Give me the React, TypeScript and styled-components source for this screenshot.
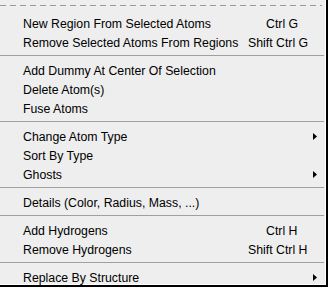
import React from 'react';
import styled, { createGlobalStyle } from 'styled-components';

const GlobalStyle = createGlobalStyle`
  html, body {
    margin: 0;
    padding: 0;
    background: #eeeeee;
  }
  body {
    font-family: 'Liberation Sans', Arial, sans-serif;
  }
`;

const Menu = styled.div`
  box-sizing: border-box;
  width: 328px;
  height: 287px;
  overflow: hidden;
  background-color: #eeeeee;
  border-right: 2px solid #000;
  border-bottom: 2px solid #000;
  box-shadow: inset -1px -1px 0 #ffffff;
  display: flex;
  flex-direction: column;
`;

const TearOff = styled.div`
  flex: none;
  height: 14px;
  padding-top: 5px;
  box-sizing: border-box;
  margin-right: 4px;

  &::before {
    content: '';
    display: block;
    height: 1px;
    background: repeating-linear-gradient(
      to right,
      #999999 0 6px,
      transparent 6px 10px
    );
  }
`;

const Item = styled.div`
  flex: none;
  display: grid;
  grid-template-columns: 248px 1fr 14px;
  align-items: center;
  box-sizing: border-box;
  height: 19px;
  padding-top: 1px;
  font-size: 12.3px;
  line-height: 18px;
  color: #000;
  white-space: nowrap;
  cursor: default;
`;

const Label = styled.span`
  padding-left: 23px;
`;

const Accel = styled.span<{ $shift?: number }>`
  padding-left: ${({ $shift }) => $shift ?? 0}px;
`;

const ArrowIcon = styled.svg`
  display: block;
  width: 4px;
  height: 7px;
  margin-left: 1px;
  margin-top: -1px;
`;

const Arrow = () => (
  <ArrowIcon viewBox="0 0 4 7">
    <polygon points="0,0 4,3.5 0,7" fill="#000" />
  </ArrowIcon>
);

const Separator = styled.div`
  flex: none;
  height: 9px;
  padding-top: 3px;
  box-sizing: border-box;
  margin-right: 2px;

  &::before {
    content: '';
    display: block;
    height: 1px;
    background-color: #a0a0a0;
  }
`;

type Entry =
  | { sep: true }
  | { label: string; accel?: string; shift?: number; sub?: boolean };

const entries: Entry[] = [
  { label: 'New Region From Selected Atoms', accel: 'Ctrl G', shift: 18 },
  { label: 'Remove Selected Atoms From Regions', accel: 'Shift Ctrl G' },
  { sep: true },
  { label: 'Add Dummy At Center Of Selection' },
  { label: 'Delete Atom(s)' },
  { label: 'Fuse Atoms' },
  { sep: true },
  { label: 'Change Atom Type', sub: true },
  { label: 'Sort By Type' },
  { label: 'Ghosts', sub: true },
  { sep: true },
  { label: 'Details (Color, Radius, Mass, ...)' },
  { sep: true },
  { label: 'Add Hydrogens', accel: 'Ctrl H', shift: 18 },
  { label: 'Remove Hydrogens', accel: 'Shift Ctrl H' },
  { sep: true },
  { label: 'Replace By Structure', sub: true },
];

export default function App() {
  return (
    <>
      <GlobalStyle />
      <Menu>
        <TearOff />
        {entries.map((e, i) =>
          'sep' in e ? (
            <Separator key={i} />
          ) : (
            <Item key={i}>
              <Label>{e.label}</Label>
              <Accel $shift={e.shift}>{e.accel}</Accel>
              {e.sub ? <Arrow /> : <span />}
            </Item>
          )
        )}
      </Menu>
    </>
  );
}
